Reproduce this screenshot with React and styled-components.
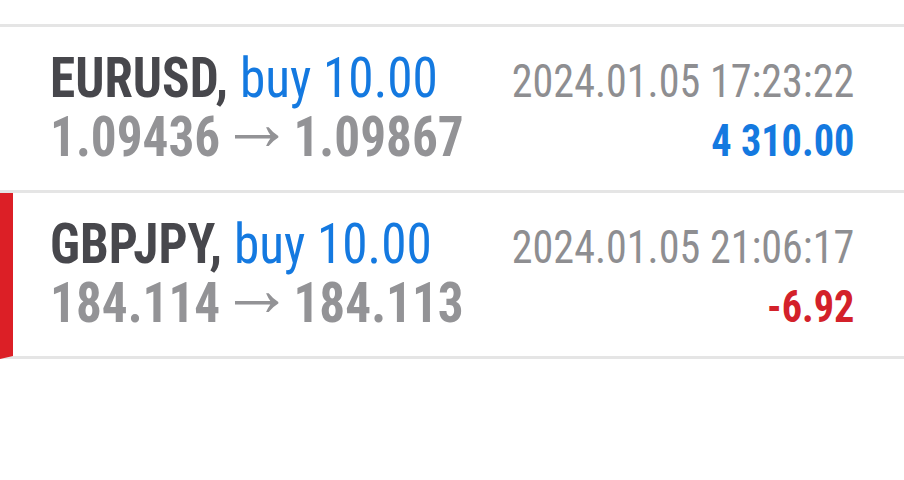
import styled, { createGlobalStyle } from "styled-components";

const GlobalStyle = createGlobalStyle`
  html, body {
    margin: 0;
    padding: 0;
    background: #ffffff;
  }
  body {
    font-family: Roboto, "Noto Sans", sans-serif;
  }
`;

const Page = styled.div`
  width: 904px;
  height: 480px;
  padding-top: 24px;
  box-sizing: border-box;
  background: #ffffff;
`;

const List = styled.div`
  border-top: 3px solid #e5e5e5;
`;

// red stripe on the left marks a losing trade
const Row = styled.div`
  box-sizing: content-box;
  height: 141px;
  padding: 22px 50px 0 ${(props) => (props.marked ? "37px" : "50px")};
  border-left: ${(props) => (props.marked ? "13px solid #dc1f26" : "none")};
  border-bottom: 3px solid #e5e5e5;
`;

const Line = styled.div`
  display: flex;
  justify-content: space-between;
  align-items: baseline;
  height: 59px;
  line-height: 59px;
  white-space: nowrap;
`;

// condensed Roboto, squeezed a little more to match the terminal's look
const Cond = styled.span`
  display: inline-block;
  font-stretch: condensed;
  transform: scaleX(0.915);
  transform-origin: ${(props) => (props.right ? "right" : "left")} center;
`;

const Symbol = styled(Cond)`
  font-size: 56px;
  font-weight: 700;
  color: #47474c;
`;

const Deal = styled.span`
  color: #1479e0;
  font-weight: 400;
`;

const Prices = styled(Cond)`
  font-size: 56px;
  font-weight: 700;
  color: #939396;
`;

const Arrow = styled.span`
  font-size: 80px;
  font-weight: 500;
  line-height: 0;
  vertical-align: 6px;
`;

const Time = styled(Cond)`
  font-size: 46px;
  font-weight: 400;
  color: #8e8e91;
`;

const Profit = styled(Cond)`
  font-size: 44px;
  font-weight: 700;
  color: ${(props) => (props.loss ? "#d3212a" : "#1479e0")};
`;

const trades = [
  {
    symbol: "EURUSD",
    deal: "buy 10.00",
    open: "1.09436",
    close: "1.09867",
    time: "2024.01.05 17:23:22",
    profit: "4 310.00",
    loss: false,
  },
  {
    symbol: "GBPJPY",
    deal: "buy 10.00",
    open: "184.114",
    close: "184.113",
    time: "2024.01.05 21:06:17",
    profit: "-6.92",
    loss: true,
  },
];

function App() {
  return (
    <>
      <GlobalStyle />
      <Page>
        <List>
          {trades.map((t) => (
            <Row key={t.symbol} marked={t.loss}>
              <Line>
                <Symbol>
                  {t.symbol}, <Deal>{t.deal}</Deal>
                </Symbol>
                <Time right>{t.time}</Time>
              </Line>
              <Line>
                <Prices>
                  {t.open}
                  <Arrow>→</Arrow>
                  {t.close}
                </Prices>
                <Profit right loss={t.loss}>
                  {t.profit}
                </Profit>
              </Line>
            </Row>
          ))}
        </List>
      </Page>
    </>
  );
}

export default App;
